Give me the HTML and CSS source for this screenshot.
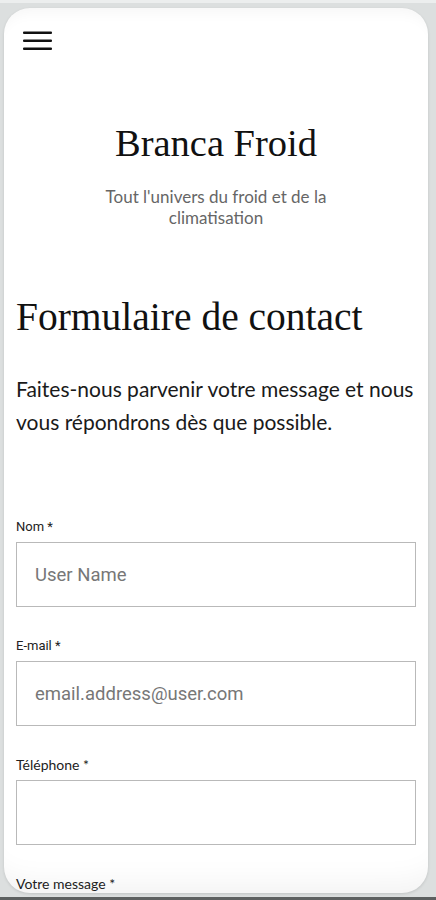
FILE: index.html
```html
<!DOCTYPE html>
<html lang="fr">
<head>
<meta charset="utf-8">
<title>Branca Froid – Formulaire de contact</title>
<link rel="stylesheet" href="styles.css">
</head>
<body>
<div class="screen">
  <div class="topstrip"></div>
  <div class="card">
    <header class="header">
      <button class="menu" aria-label="Menu">
        <svg width="30" height="20" viewBox="0 0 30 20">
          <rect x="0" y="0.5" width="29" height="2.6" rx="1" fill="#111"/>
          <rect x="0" y="8.5" width="29" height="2.6" rx="1" fill="#111"/>
          <rect x="0" y="16.5" width="29" height="2.6" rx="1" fill="#111"/>
        </svg>
      </button>
      <div class="brand">
        <h1 class="site-title">Branca Froid</h1>
        <p class="tagline">Tout l'univers du froid et de la climatisation</p>
      </div>
    </header>
    <main class="content">
      <h2 class="page-title">Formulaire de contact</h2>
      <p class="intro">Faites-nous parvenir votre message et nous vous répondrons dès que possible.</p>
      <form class="form">
        <div class="field">
          <label class="label label-roboto">Nom *</label>
          <div class="input"><span class="placeholder">User Name</span></div>
        </div>
        <div class="field">
          <label class="label label-roboto">E-mail *</label>
          <div class="input"><span class="placeholder">email.address@user.com</span></div>
        </div>
        <div class="field">
          <label class="label">Téléphone *</label>
          <div class="input"></div>
        </div>
        <div class="field">
          <label class="label">Votre message *</label>
        </div>
      </form>
    </main>
  </div>
  <div class="bottomstrip"></div>
</div>
</body>
</html>
```

FILE: styles.css
```css
* { box-sizing: border-box; }
html, body {
  margin: 0;
  padding: 0;
  height: 900px;
  overflow: hidden;
}
body {
  background: #dcdfdf;
}
.screen {
  height: 900px;
  display: flex;
  flex-direction: column;
}
.topstrip {
  height: 3px;
  background: #eceeee;
  flex: none;
}
.card {
  flex: none;
  margin: 5px 0 0 4px;
  width: 424px;
  height: 885px;
  background: #fff;
  border-radius: 26px;
  overflow: hidden;
  box-shadow: inset 0 14px 14px -10px rgba(0,0,0,0.04), inset 0 -40px 30px -30px rgba(0,0,0,0.05), 0 1px 3px rgba(0,0,0,0.12);
}
.bottomstrip {
  flex: none;
  margin-top: auto;
  height: 3px;
  background: #5d6060;
}
.header {
  padding: 23px 0 0 0;
}
.menu {
  display: block;
  margin-left: 19px;
  padding: 0;
  border: 0;
  background: none;
  width: 30px;
  height: 20px;
}
.menu svg { display: block; }
.brand {
  text-align: center;
  margin-top: 70px;
}
.site-title {
  margin: 0;
  font-family: "Liberation Serif", serif;
  font-weight: 400;
  font-size: 38.5px;
  line-height: 44px;
  color: #111;
}
.tagline {
  margin: 21px auto 0;
  width: 250px;
  font-family: Lato, "Liberation Sans", sans-serif;
  font-size: 17px;
  line-height: 21px;
  color: #666;
}
.content {
  padding: 0 12px 0 12px;
}
.page-title {
  margin: 66px 0 0;
  font-family: "Liberation Serif", serif;
  font-weight: 400;
  font-size: 39.5px;
  line-height: 46px;
  color: #111;
}
.intro {
  margin: 32px 0 0;
  font-family: Lato, "Liberation Sans", sans-serif;
  font-size: 21px;
  line-height: 33px;
  color: #1a1a1a;
}
.form {
  margin-top: 81px;
  display: flex;
  flex-direction: column;
  gap: 31px;
}
.field {
  display: flex;
  flex-direction: column;
}
.label {
  font-family: Lato, "Liberation Sans", sans-serif;
  font-size: 14px;
  line-height: 16px;
  color: #222;
  margin-bottom: 7px;
}
.label-roboto {
  font-family: Roboto, "Liberation Sans", sans-serif;
  font-size: 13px;
}
.input {
  height: 65px;
  border: 1.5px solid #b9b9b9;
  display: flex;
  align-items: center;
  padding-left: 18px;
  background: #fff;
}
.placeholder {
  font-family: Roboto, "Liberation Sans", sans-serif;
  font-size: 18.5px;
  color: #777;
}
```
